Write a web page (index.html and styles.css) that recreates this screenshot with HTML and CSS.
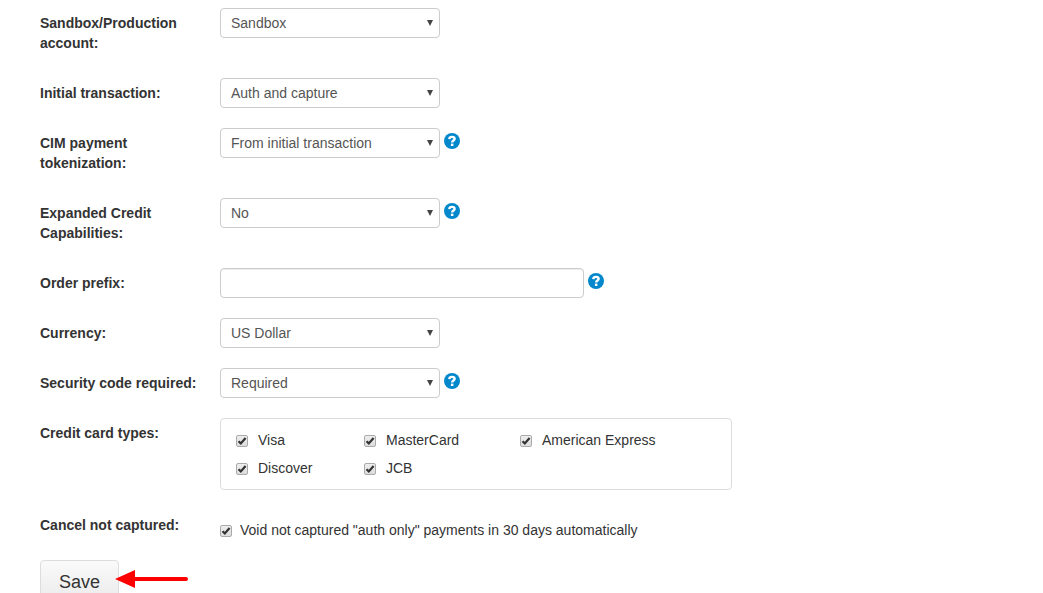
FILE: index.html
```html
<!DOCTYPE html>
<html lang="en">
<head>
    <meta charset="UTF-8">
    <meta name="viewport" content="width=device-width, initial-scale=1.0">
    <title>Payment method settings</title>
    <link rel="stylesheet" href="styles.css">
</head>
<body>
    <!-- Shared help icon -->
    <svg class="sprite" aria-hidden="true">
        <symbol id="icon-help" viewBox="0 0 16 16">
            <circle cx="8" cy="8" r="8" fill="#0388cc"/>
            <path d="M5.3 6.1C5.4 4.5 6.4 3.9 8 3.9s2.6.8 2.6 2c0 1.6-2.4 1.6-2.4 3.5" fill="none" stroke="#fff" stroke-width="2.4"/>
            <rect x="6.9" y="10.6" width="2.5" height="2.4" fill="#fff"/>
        </symbol>
    </svg>

    <form class="settings-form">
        <div class="form-row">
            <label class="form-label" for="mode">Sandbox/Production account:</label>
            <div class="form-control">
                <select id="mode" class="select">
                    <option>Sandbox</option>
                    <option>Production</option>
                </select>
            </div>
        </div>

        <div class="form-row">
            <label class="form-label" for="transaction">Initial transaction:</label>
            <div class="form-control">
                <select id="transaction" class="select">
                    <option>Auth and capture</option>
                    <option>Auth only</option>
                </select>
            </div>
        </div>

        <div class="form-row">
            <label class="form-label" for="tokenization">CIM payment tokenization:</label>
            <div class="form-control">
                <select id="tokenization" class="select">
                    <option>From initial transaction</option>
                </select>
                <a href="#" class="help-link" aria-label="Help"><svg class="help-icon"><use href="#icon-help"/></svg></a>
            </div>
        </div>

        <div class="form-row">
            <label class="form-label" for="expanded">Expanded Credit Capabilities:</label>
            <div class="form-control">
                <select id="expanded" class="select">
                    <option>No</option>
                    <option>Yes</option>
                </select>
                <a href="#" class="help-link" aria-label="Help"><svg class="help-icon"><use href="#icon-help"/></svg></a>
            </div>
        </div>

        <div class="form-row">
            <label class="form-label" for="prefix">Order prefix:</label>
            <div class="form-control">
                <input type="text" id="prefix" class="text-input">
                <a href="#" class="help-link" aria-label="Help"><svg class="help-icon"><use href="#icon-help"/></svg></a>
            </div>
        </div>

        <div class="form-row">
            <label class="form-label" for="currency">Currency:</label>
            <div class="form-control">
                <select id="currency" class="select">
                    <option>US Dollar</option>
                </select>
            </div>
        </div>

        <div class="form-row">
            <label class="form-label" for="cvv">Security code required:</label>
            <div class="form-control">
                <select id="cvv" class="select">
                    <option>Required</option>
                    <option>Not required</option>
                </select>
                <a href="#" class="help-link" aria-label="Help"><svg class="help-icon"><use href="#icon-help"/></svg></a>
            </div>
        </div>

        <div class="form-row" role="group" aria-labelledby="cards-label">
            <span class="form-label" id="cards-label">Credit card types:</span>
            <div class="card-types">
                <label class="check"><input type="checkbox" class="checkbox" checked>Visa</label>
                <label class="check"><input type="checkbox" class="checkbox" checked>MasterCard</label>
                <label class="check"><input type="checkbox" class="checkbox" checked>American Express</label>
                <label class="check"><input type="checkbox" class="checkbox" checked>Discover</label>
                <label class="check"><input type="checkbox" class="checkbox" checked>JCB</label>
            </div>
        </div>

        <div class="form-row" role="group" aria-labelledby="cancel-label">
            <span class="form-label" id="cancel-label">Cancel not captured:</span>
            <div class="form-control single-check">
                <label class="check"><input type="checkbox" class="checkbox" checked>Void not captured "auth only" payments in 30 days automatically</label>
            </div>
        </div>

        <div class="form-actions">
            <button type="submit" class="save-button">Save</button>
            <!-- Arrow pointing at the save button -->
            <svg class="pointer" viewBox="0 0 74 18" aria-hidden="true">
                <path d="M18 9h53" stroke="#f00" stroke-width="4" stroke-linecap="round"/>
                <path d="M0 9L20 0v18z" fill="#f00"/>
            </svg>
        </div>
    </form>
</body>
</html>
```
FILE: styles.css
```css
* {
    box-sizing: border-box;
}

body {
    margin: 0;
    background-color: #fff;
    color: #333;
    font-family: "Liberation Sans", Arial, sans-serif;
    font-size: 14px;
    line-height: 20px;
}

.sprite {
    display: none;
}

.settings-form {
    display: flex;
    flex-direction: column;
    gap: 20px;
    padding: 8px 40px 20px;
}

.form-row {
    display: flex;
    align-items: flex-start;
}

.form-label {
    flex: 0 0 180px;
    padding: 5px 20px 5px 0;
    font-weight: bold;
}

.form-control {
    display: flex;
    flex: 1;
    align-items: flex-start;
    gap: 4px;
}

.select,
.text-input {
    height: 30px;
    margin: 0;
    padding: 0 10px;
    border: 1px solid #ccc;
    border-radius: 4px;
    background-color: #fff;
    color: #555;
    font: inherit;
}

.select {
    width: 220px;
    appearance: none;
    background-image: url("data:image/svg+xml,%3Csvg xmlns='http://www.w3.org/2000/svg' width='6' height='6'%3E%3Cpath d='M0 0h6L3 6z' fill='%23444'/%3E%3C/svg%3E");
    background-repeat: no-repeat;
    background-position: right 6px top 11px;
}

.text-input {
    width: 364px;
    box-shadow: inset 0 1px 1px rgba(0, 0, 0, 0.075);
}

.help-link {
    display: block;
    padding-top: 5px;
}

.help-icon {
    display: block;
    width: 16px;
    height: 16px;
}

.card-types {
    display: grid;
    grid-template-columns: 128px 156px auto;
    gap: 8px 0;
    width: 512px;
    padding: 11px 15px;
    border: 1px solid #ddd;
    border-radius: 4px;
}

.check {
    display: flex;
    align-items: center;
    gap: 10px;
}

.checkbox {
    flex: none;
    width: 12px;
    height: 12px;
    margin: 2px 0 0;
    appearance: none;
    border: 1px solid #aaa;
    border-radius: 2px;
    background: linear-gradient(#eee, #ddd);
}

.checkbox:checked {
    background: url("data:image/svg+xml,%3Csvg xmlns='http://www.w3.org/2000/svg' width='10' height='10'%3E%3Cpath d='M1.5 5.2l2.3 2.2L8.6 2' fill='none' stroke='%23333' stroke-width='2.2'/%3E%3C/svg%3E") center no-repeat, linear-gradient(#eee, #ddd);
}

.single-check {
    padding-top: 10px;
}

.single-check .check {
    gap: 8px;
}

.form-actions {
    display: flex;
    position: relative;
}

.save-button {
    padding: 11px 18px;
    border: 1px solid #ddd;
    border-radius: 4px;
    background: linear-gradient(#fafafa, #eaeaea);
    color: #333;
    font: inherit;
    font-size: 18px;
    cursor: pointer;
}

.pointer {
    position: absolute;
    top: 10px;
    left: 75px;
    width: 74px;
    height: 18px;
}
```
